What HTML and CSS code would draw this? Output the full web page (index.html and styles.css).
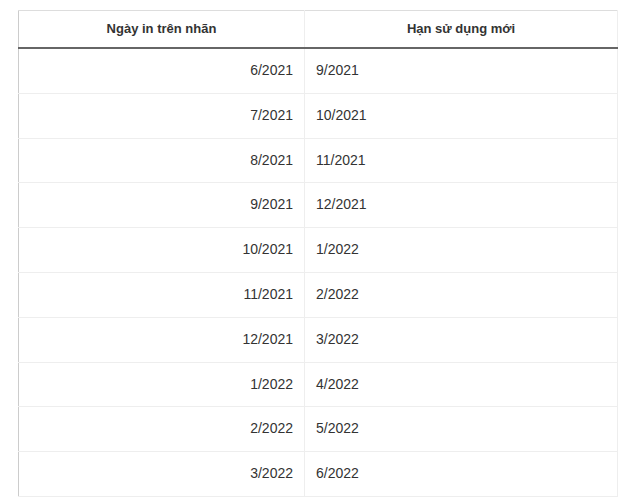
FILE: index.html
```html
<!DOCTYPE html>
<html lang="vi">
<head>
<meta charset="utf-8">
<title>Hạn sử dụng mới</title>
<link rel="stylesheet" href="styles.css">
</head>
<body>
<div class="wrap">
<table class="dates">
  <colgroup><col class="c1"><col class="c2"></colgroup>
  <thead>
    <tr><th>Ngày in trên nhãn</th><th>Hạn sử dụng mới</th></tr>
  </thead>
  <tbody>
    <tr><td class="old">6/2021</td><td class="new">9/2021</td></tr>
    <tr><td class="old">7/2021</td><td class="new">10/2021</td></tr>
    <tr><td class="old">8/2021</td><td class="new">11/2021</td></tr>
    <tr><td class="old">9/2021</td><td class="new">12/2021</td></tr>
    <tr><td class="old">10/2021</td><td class="new">1/2022</td></tr>
    <tr><td class="old">11/2021</td><td class="new">2/2022</td></tr>
    <tr><td class="old">12/2021</td><td class="new">3/2022</td></tr>
    <tr><td class="old">1/2022</td><td class="new">4/2022</td></tr>
    <tr><td class="old">2/2022</td><td class="new">5/2022</td></tr>
    <tr><td class="old">3/2022</td><td class="new">6/2022</td></tr>
  </tbody>
</table>
</div>
</body>
</html>
```

FILE: styles.css
```css
html, body {
  margin: 0;
  padding: 0;
  background: #fff;
}
.wrap {
  padding: 10px 0 0 18px;
}
.dates {
  border-collapse: collapse;
  table-layout: fixed;
  width: 600px;
  font-family: "Liberation Sans", Arial, sans-serif;
  font-size: 14px;
  color: #333;
  border-top: 1px solid #ddd;
  border-left: 1px solid #ccc;
  border-right: 1px solid #eee;
}
.c1 { width: 286px; }
.c2 { width: 313px; }
.dates th {
  font-size: 13px;
  font-weight: bold;
  text-align: center;
  line-height: 20px;
  padding: 8px 10px;
  border-bottom: 2px solid #666;
  border-right: 1px solid #eee;
}
.dates td {
  line-height: 19.8px;
  padding: 12px 11px;
  border-bottom: 1px solid #eee;
  border-right: 1px solid #eee;
}
.dates td.old { text-align: right; }
.dates td.new { text-align: left; }
```
